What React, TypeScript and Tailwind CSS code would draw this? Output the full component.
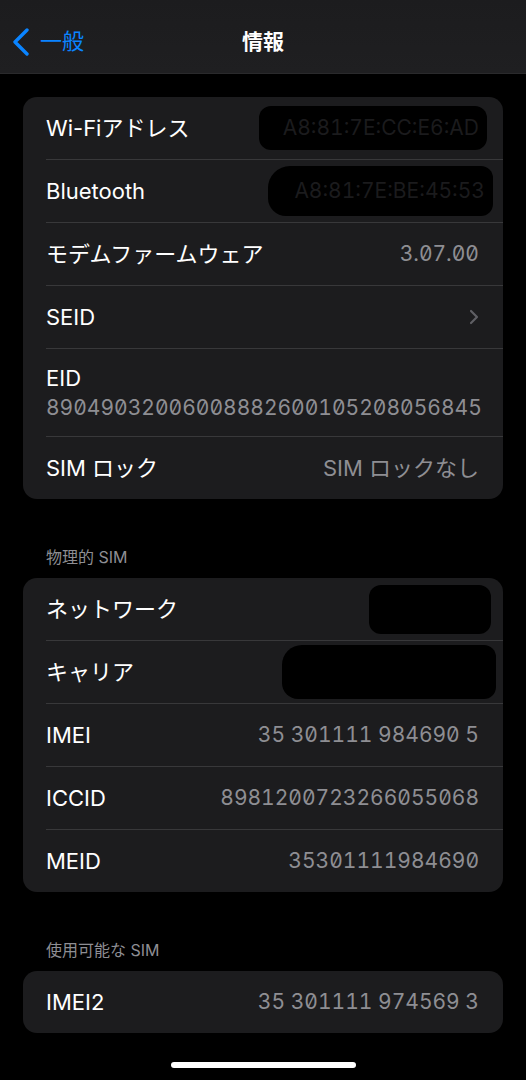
import React from "react";

const FONT = { fontFamily: 'Inter, "Noto Sans CJK JP", "Noto Sans", sans-serif' };

function Sep() {
  return <div className="ml-[23px] h-px bg-[#38383a]" />;
}

function Row({ label, value, children }: { label: string; value?: string; children?: React.ReactNode }) {
  return (
    <div className="flex h-[62px] items-center justify-between pl-[23px] pr-[24px]">
      <span className="text-[22px] text-white">{label}</span>
      {children ?? (
        <span className="text-[21px] text-[#8e8e93] tabular-nums slashed-zero">{value}</span>
      )}
    </div>
  );
}

function Blob({ text, w, h, mr, cls }: { text?: string; w: number; h: number; mr: number; cls?: string }) {
  return (
    <div
      className={`flex items-center justify-end rounded-[12px] bg-black pr-[8px] ${cls ?? ""}`}
      style={{ width: w, height: h, marginRight: -mr }}
    >
      {text && <span className="text-[21px] text-[#1b1b1d] tabular-nums">{text}</span>}
    </div>
  );
}

function Card({ children }: { children: React.ReactNode }) {
  return <div className="mx-[23px] overflow-hidden rounded-[14px] bg-[#1c1c1e]">{children}</div>;
}

function SectionHeader({ title }: { title: string }) {
  return (
    <div className="mb-[11px] mt-[48px] pl-[46px] text-[16px] leading-[20px] text-[#8e8e93]">{title}</div>
  );
}

export default function App() {
  return (
    <div className="min-h-[1080px] w-[526px] bg-black" style={FONT}>
      <div className="relative flex h-[74px] items-center border-b border-[#2a2a2c] bg-gradient-to-b from-[#1c1c1e] to-[#1f1f21] px-[12px]">
        <div className="flex items-center gap-[10px] pt-[10px]">
          <svg width="18" height="28" viewBox="0 0 18 28" fill="none">
            <path d="M15 2 L3 14 L15 26" stroke="#0a84ff" strokeWidth="3.4" strokeLinecap="round" strokeLinejoin="round" />
          </svg>
          <span className="text-[22px] text-[#0a84ff]">一般</span>
        </div>
        <div className="absolute left-0 right-0 top-[10px] flex h-[64px] items-center justify-center pointer-events-none">
          <span className="text-[21px] font-bold text-white">情報</span>
        </div>
      </div>

      <div className="h-[23px]" />

      <Card>
        <Row label="Wi-Fiアドレス">
          <Blob text="A8:81:7E:CC:E6:AD" w={228} h={44} mr={8} />
        </Row>
        <Sep />
        <Row label="Bluetooth">
          <Blob text="A8:81:7E:BE:45:53" w={225} h={50} mr={14} cls="rounded-tl-[22px] rounded-bl-[18px]" />
        </Row>
        <Sep />
        <Row label="モデムファームウェア" value="3.07.00" />
        <Sep />
        <Row label="SEID">
          <svg width="10" height="16" viewBox="0 0 10 16" fill="none">
            <path d="M2 2 L8 8 L2 14" stroke="#5f5f64" strokeWidth="2.2" strokeLinecap="round" strokeLinejoin="round" />
          </svg>
        </Row>
        <Sep />
        <div className="flex h-[87px] flex-col justify-center pl-[23px] pr-[24px]">
          <span className="text-[22px] leading-[30px] text-white">EID</span>
          <span className="text-[21px] leading-[30px] text-[#8e8e93] tabular-nums slashed-zero">
            89049032006008882600105208056845
          </span>
        </div>
        <Sep />
        <Row label="SIM ロック">
          <span className="text-[22px] text-[#8e8e93]">SIM ロックなし</span>
        </Row>
      </Card>

      <SectionHeader title="物理的 SIM" />
      <Card>
        <Row label="ネットワーク">
          <Blob w={122} h={49} mr={12} />
        </Row>
        <Sep />
        <Row label="キャリア">
          <Blob w={214} h={54} mr={17} cls="rounded-tl-[20px] rounded-bl-[16px]" />
        </Row>
        <Sep />
        <Row label="IMEI" value="35 301111 984690 5" />
        <Sep />
        <Row label="ICCID" value="8981200723266055068" />
        <Sep />
        <Row label="MEID" value="35301111984690" />
      </Card>

      <SectionHeader title="使用可能な SIM" />
      <Card>
        <Row label="IMEI2" value="35 301111 974569 3" />
      </Card>

      <div className="flex justify-center pt-[29px]">
        <div className="h-[6px] w-[185px] rounded-full bg-white" />
      </div>
    </div>
  );
}
